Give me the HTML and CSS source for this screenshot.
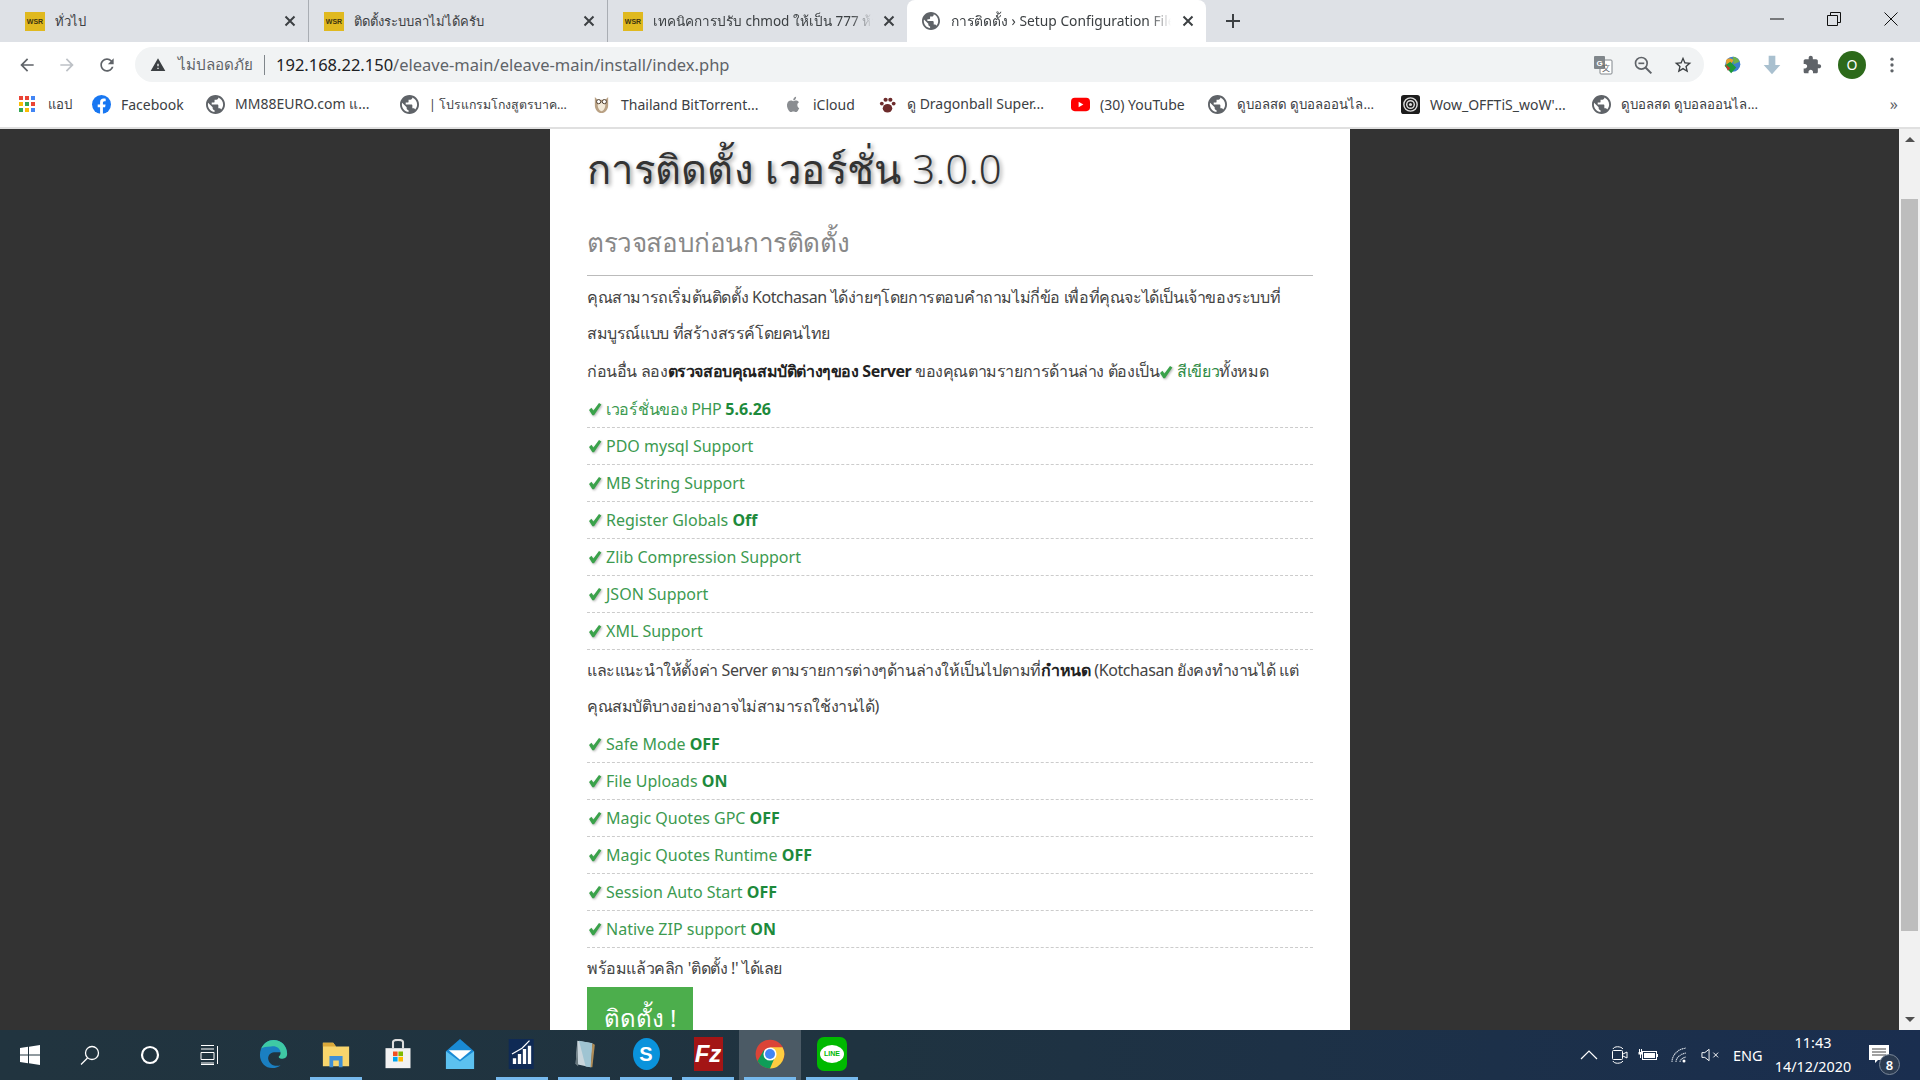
FILE: index.html
```html
<!DOCTYPE html>
<html lang="th">
<head>
<meta charset="UTF-8">
<title>การติดตั้ง › Setup Configuration File</title>
<link rel="stylesheet" href="styles.css">
</head>
<body>
<svg class="sprite" width="0" height="0">
  <symbol id="globe" viewBox="2 2 20 20"><path d="M12 2C6.48 2 2 6.48 2 12s4.48 10 10 10 10-4.48 10-10S17.52 2 12 2zm-1 17.93c-3.95-.49-7-3.85-7-7.93 0-.62.08-1.21.21-1.79L9 15v1c0 1.1.9 2 2 2v1.93zm6.9-2.54c-.26-.81-1-1.39-1.9-1.39h-1v-3c0-.55-.45-1-1-1H8v-2h2c.55 0 1-.45 1-1V7h2c1.1 0 2-.9 2-2v-.41c2.93 1.19 5 4.06 5 7.41 0 2.08-.8 3.97-2.1 5.39z"/></symbol>
  <symbol id="close" viewBox="0 0 12 12"><path d="M1.5 1.5l9 9M10.5 1.5l-9 9" stroke="currentColor" stroke-width="2" fill="none"/></symbol>
  <symbol id="check" viewBox="0 0 14 14"><path d="M1 8l2.400-2.200 2 2.600L11 1l2.400 1.600L6 13.200H4.400z"/></symbol>
</svg>

<div class="tabbar">
  <div class="tab">
    <span class="wsr">WSR</span>
    <span class="tab-title">ทั่วไป</span>
    <svg class="tab-close"><use href="#close"/></svg>
  </div>
  <div class="tab">
    <span class="wsr">WSR</span>
    <span class="tab-title">ติดตั้งระบบลาไม่ได้ครับ</span>
    <svg class="tab-close"><use href="#close"/></svg>
  </div>
  <div class="tab no-sep">
    <span class="wsr">WSR</span>
    <span class="tab-title fade">เทคนิคการปรับ chmod ให้เป็น 777 ห้าม</span>
    <svg class="tab-close"><use href="#close"/></svg>
  </div>
  <div class="tab active">
    <svg class="tab-globe"><use href="#globe"/></svg>
    <span class="tab-title fade">การติดตั้ง › Setup Configuration File</span>
    <svg class="tab-close"><use href="#close"/></svg>
  </div>
  <svg class="new-tab" viewBox="0 0 16 16"><path d="M8 1v14M1 8h14" stroke="#3c4043" stroke-width="2"/></svg>
  <div class="win-controls">
    <svg viewBox="0 0 14 14"><path d="M0 7h14" stroke="#111" fill="none"/></svg>
    <svg viewBox="0 0 14 14"><path d="M.5 3.500h10v10H.5zM3.500 3.500v-3h10v10h-3" stroke="#111" fill="none"/></svg>
    <svg viewBox="0 0 14 14"><path d="M.5.5l13 13M13.500.5l-13 13" stroke="#111" fill="none"/></svg>
  </div>
</div>

<div class="toolbar">
  <svg class="nav-btn" viewBox="0 0 24 24"><path d="M20 11H7.830l5.590-5.590L12 4l-8 8 8 8 1.410-1.410L7.830 13H20v-2z"/></svg>
  <svg class="nav-btn off" viewBox="0 0 24 24"><path d="M4 11h12.170l-5.590-5.590L12 4l8 8-8 8-1.410-1.410L16.170 13H4v-2z"/></svg>
  <svg class="nav-btn" viewBox="0 0 24 24"><path d="M17.650 6.350C16.200 4.900 14.210 4 12 4c-4.420 0-7.990 3.580-7.990 8s3.570 8 7.990 8c3.730 0 6.840-2.550 7.730-6h-2.080c-.82 2.330-3.040 4-5.650 4-3.310 0-6-2.690-6-6s2.690-6 6-6c1.660 0 3.140.69 4.220 1.780L13 11h7V4l-2.350 2.350z"/></svg>
  <div class="omnibox">
    <svg class="warn" viewBox="0 0 24 24"><path d="M1 21h22L12 2 1 21zm12-3h-2v-2h2v2zm0-4h-2v-4h2v4z"/></svg>
    <span class="insecure">ไม่ปลอดภัย</span>
    <span class="pipe"></span>
    <span class="url">192.168.22.150<span class="url-rest">/eleave-main/eleave-main/install/index.php</span></span>
    <div class="omni-icons">
      <svg viewBox="0 0 20 20"><rect x="7" y="5" width="12" height="14" rx="1" fill="#fff" stroke="#80868b"/><rect x="1" y="1" width="11" height="13" rx="1" fill="#80868b"/><text x="6.500" y="11" class="tr-g">G</text><text x="13" y="16" class="tr-z">文</text></svg>
      <svg viewBox="0 0 24 24"><circle cx="10" cy="10" r="7" fill="none" stroke="#5f6368" stroke-width="2"/><path d="M15 15l7 7" stroke="#5f6368" stroke-width="2.400"/><path d="M6.500 10h7" stroke="#5f6368" stroke-width="2"/></svg>
      <svg viewBox="0 0 24 24"><path fill="#3c4043" d="M22 9.240l-7.190-.62L12 2 9.190 8.630 2 9.240l5.460 4.730L5.820 21 12 17.270 18.180 21l-1.630-7.030L22 9.240zM12 15.400l-3.760 2.270 1-4.280-3.320-2.880 4.380-.38L12 6.100l1.710 4.040 4.380.38-3.320 2.880 1 4.280L12 15.400z"/></svg>
    </div>
  </div>
  <div class="ext-icons">
    <svg viewBox="0 0 24 24"><circle cx="13" cy="11" r="9" fill="#3d7fce"/><path d="M5 6c3-3 7-2 9 0l-3 5-6 3z" fill="#e7a12c"/><path d="M13 2c4 0 7 3 8 6l-7 3z" fill="#6fb24a"/><path d="M3 13l7-5 7 7-6 7z" fill="#1e9a36"/><path d="M4 11l6 5-3 3z" fill="#c8372d"/></svg>
    <svg viewBox="0 0 24 24"><path d="M8 1h8v11h6L12 23 2 12h6z" fill="#a9c0cf"/></svg>
    <svg viewBox="0 0 24 24"><path fill="#5f6368" d="M20.500 11H19V7c0-1.100-.9-2-2-2h-4V3.500C13 2.120 11.880 1 10.500 1S8 2.120 8 3.500V5H4c-1.100 0-1.990.9-1.990 2v3.800H3.500c1.490 0 2.700 1.210 2.700 2.700s-1.210 2.700-2.700 2.700H2V20c0 1.100.9 2 2 2h3.800v-1.500c0-1.490 1.210-2.700 2.700-2.700 1.490 0 2.700 1.210 2.700 2.700V22H17c1.100 0 2-.9 2-2v-4h1.500c1.380 0 2.500-1.120 2.500-2.500S21.880 11 20.500 11z"/></svg>
    <span class="avatar">O</span>
    <svg viewBox="0 0 24 24"><circle cx="12" cy="5" r="2" fill="#5f6368"/><circle cx="12" cy="12" r="2" fill="#5f6368"/><circle cx="12" cy="19" r="2" fill="#5f6368"/></svg>
  </div>
</div>

<div class="bookmarks">
  <div class="bm">
    <svg class="bm-icon" viewBox="0 0 16 16">
      <rect x="0" y="0" width="4" height="4" fill="#ea4335"/><rect x="6" y="0" width="4" height="4" fill="#ea4335"/><rect x="12" y="0" width="4" height="4" fill="#4285f4"/>
      <rect x="0" y="6" width="4" height="4" fill="#fbbc05"/><rect x="6" y="6" width="4" height="4" fill="#34a853"/><rect x="12" y="6" width="4" height="4" fill="#ea4335"/>
      <rect x="0" y="12" width="4" height="4" fill="#34a853"/><rect x="6" y="12" width="4" height="4" fill="#fbbc05"/><rect x="12" y="12" width="4" height="4" fill="#4285f4"/>
    </svg>
    <span class="th">แอป</span>
  </div>
  <div class="bm">
    <svg class="bm-icon big" viewBox="0 0 20 20"><circle cx="10" cy="10" r="10" fill="#1877f2"/><path d="M13.800 12.900l.5-2.900h-2.800V8.100c0-.8.4-1.600 1.600-1.600h1.300V4s-1.100-.2-2.200-.2c-2.300 0-3.700 1.400-3.700 3.900V10H6v2.900h2.500V20h3v-7.100z" fill="#fff"/></svg>
    <span>Facebook</span>
  </div>
  <div class="bm"><svg class="bm-icon big globe"><use href="#globe"/></svg><span>MM88EURO.com แ...</span></div>
  <div class="bm"><svg class="bm-icon big globe"><use href="#globe"/></svg><span class="th tight">| โปรแกรมโกงสูตรบาค...</span></div>
  <div class="bm">
    <svg class="bm-icon big" viewBox="0 0 20 20"><path d="M3 2l3 3h8l3-3v9c0 4-3 8-7 8s-7-4-7-8z" fill="#b9a184"/><path d="M6 11c0-2 1-3 4-3s4 1 4 3-2 6-4 6-4-4-4-6z" fill="#f3ead9"/><circle cx="7" cy="7" r="2.200" fill="#fff" stroke="#4a3a2a"/><circle cx="13" cy="7" r="2.200" fill="#fff" stroke="#4a3a2a"/></svg>
    <span>Thailand BitTorrent...</span>
  </div>
  <div class="bm">
    <svg class="bm-icon big" viewBox="0 0 20 20"><path d="M14 10.500c0-2 1.600-3 1.700-3-1-1.400-2.400-1.600-2.900-1.600-1.200-.1-2.400.7-3 .7s-1.600-.7-2.600-.7C5.800 5.900 4.500 6.700 3.800 8c-1.400 2.400-.4 6 1 8 .7 1 1.500 2 2.500 2s1.400-.6 2.600-.6 1.500.6 2.600.6 1.800-1 2.400-2c.8-1.100 1.100-2.200 1.100-2.200s-2-.9-2-3.300zM12 4.400c.5-.7.900-1.600.8-2.500-.8 0-1.700.5-2.300 1.200-.5.600-.9 1.500-.8 2.400.9.100 1.800-.4 2.300-1.100z" fill="#8a8d91"/></svg>
    <span>iCloud</span>
  </div>
  <div class="bm">
    <svg class="bm-icon big" viewBox="0 0 20 20" fill="#6d2b2b"><ellipse cx="10" cy="14" rx="5" ry="4.500"/><circle cx="4" cy="9" r="2"/><circle cx="8" cy="5" r="2.200"/><circle cx="13" cy="5" r="2.200"/><circle cx="16.500" cy="9" r="2"/></svg>
    <span>ดู Dragonball Super...</span>
  </div>
  <div class="bm">
    <svg class="bm-icon big" viewBox="0 0 20 20"><rect x="0" y="3" width="20" height="14" rx="4" fill="#f00"/><path d="M8 7l5 3-5 3z" fill="#fff"/></svg>
    <span>(30) YouTube</span>
  </div>
  <div class="bm"><svg class="bm-icon big globe"><use href="#globe"/></svg><span class="th">ดูบอลสด ดูบอลออนไล...</span></div>
  <div class="bm">
    <svg class="bm-icon big" viewBox="0 0 20 20"><rect width="20" height="20" rx="3" fill="#1c1c1c"/><circle cx="10" cy="10" r="7" fill="none" stroke="#ddd" stroke-width="1.500"/><circle cx="10" cy="10" r="4" fill="none" stroke="#ddd" stroke-width="1.500"/><circle cx="10" cy="10" r="1.600" fill="#ddd"/></svg>
    <span>Wow_OFFTiS_woW'...</span>
  </div>
  <div class="bm"><svg class="bm-icon big globe"><use href="#globe"/></svg><span class="th">ดูบอลสด ดูบอลออนไล...</span></div>
  <span class="bm-more">»</span>
</div>

<div class="viewport">
  <div class="page">
    <div class="sheet">
      <h1>การติดตั้ง เวอร์ชั่น 3.0.0</h1>
      <h2>ตรวจสอบก่อนการติดตั้ง</h2>
      <p>คุณสามารถเริ่มต้นติดตั้ง Kotchasan ได้ง่ายๆโดยการตอบคำถามไม่กี่ข้อ เพื่อที่คุณจะได้เป็นเจ้าของระบบที่สมบูรณ์แบบ ที่สร้างสรรค์โดยคนไทย</p>
      <p>ก่อนอื่น ลอง<b>ตรวจสอบคุณสมบัติต่างๆของ Server</b> ของคุณตามรายการด้านล่าง ต้องเป็น<svg class="check"><use href="#check"/></svg> <span class="green">สีเขียว</span>ทั้งหมด</p>
      <ul>
        <li><svg class="check"><use href="#check"/></svg><span class="li-th">เวอร์ชั่นของ PHP </span><b>5.6.26</b></li>
        <li><svg class="check"><use href="#check"/></svg>PDO mysql Support</li>
        <li><svg class="check"><use href="#check"/></svg>MB String Support</li>
        <li><svg class="check"><use href="#check"/></svg>Register Globals <b>Off</b></li>
        <li><svg class="check"><use href="#check"/></svg>Zlib Compression Support</li>
        <li><svg class="check"><use href="#check"/></svg>JSON Support</li>
        <li><svg class="check"><use href="#check"/></svg>XML Support</li>
      </ul>
      <p>และแนะนำให้ตั้งค่า Server ตามรายการต่างๆด้านล่างให้เป็นไปตามที่<b>กำหนด</b> (Kotchasan ยังคงทำงานได้ แต่คุณสมบัติบางอย่างอาจไม่สามารถใช้งานได้)</p>
      <ul>
        <li><svg class="check"><use href="#check"/></svg>Safe Mode <b>OFF</b></li>
        <li><svg class="check"><use href="#check"/></svg>File Uploads <b>ON</b></li>
        <li><svg class="check"><use href="#check"/></svg>Magic Quotes GPC <b>OFF</b></li>
        <li><svg class="check"><use href="#check"/></svg>Magic Quotes Runtime <b>OFF</b></li>
        <li><svg class="check"><use href="#check"/></svg>Session Auto Start <b>OFF</b></li>
        <li><svg class="check"><use href="#check"/></svg>Native ZIP support <b>ON</b></li>
      </ul>
      <p>พร้อมแล้วคลิก 'ติดตั้ง !' ได้เลย</p>
      <a class="install-btn" href="#">ติดตั้ง !</a>
    </div>
  </div>
  <div class="scrollbar">
    <span class="arrow up"></span>
    <div class="track"><div class="thumb"></div></div>
    <span class="arrow down"></span>
  </div>
</div>

<div class="taskbar">
  <div class="sys-btn"><svg viewBox="0 0 20 20"><path d="M0 3l8-1.200V9.500H0zM9 1.700L20 0v9.500H9zM0 10.500h8v7.700L0 17zM9 10.500h11V20L9 18.300z" fill="#fff"/></svg></div>
  <div class="sys-btn"><svg viewBox="0 0 20 20"><circle cx="12" cy="8" r="6.500" fill="none" stroke="#fff" stroke-width="1.300"/><path d="M7.500 13L1 19.500" stroke="#fff" stroke-width="1.300"/></svg></div>
  <div class="sys-btn"><svg viewBox="0 0 20 20"><circle cx="10" cy="10" r="8" fill="none" stroke="#fff" stroke-width="2.200"/></svg></div>
  <div class="sys-btn"><svg viewBox="0 0 20 20"><path d="M1 .5h13M1 4h13M1 7.500h13v7H1zM1 18h13M1 19.500h13M17.500 1v18" stroke="#fff" fill="none"/></svg></div>
  <div class="sys-gap"></div>

  <div class="app"><svg viewBox="0 0 32 32"><path d="M30 16C30 7 23.500 1 15.500 1 7.500 1 1 8 1 17c0 8 6 14 13 14 4 0 7-1 9-3-6 2-12-1-13-6-1-4 2-8 6-8h7c4 0 7 2 7 2z" fill="#1a7fc1"/><path d="M2 11C5 4 10 1 15.500 1 23.500 1 30 7 30 16c0 4-3 5-6 5-2 0-3-1-3-2 1-1 2-2 2-4 0-5-5-8-10-7-5 0-9 1-11 2z" fill="#3fc9a4"/></svg></div>
  <div class="app running"><svg viewBox="0 0 32 32"><path d="M2 4h11l3 4h14v21H2z" fill="#f8d56c"/><path d="M2 4h11l3 4H2z" fill="#dba93a"/><path d="M9 30V18h14v12h-4v-7h-6v7z" fill="#3f8fd6"/></svg></div>
  <div class="app"><svg viewBox="0 0 32 36"><path d="M1 11h30v24H1z" fill="#f2f2f2"/><path d="M10 11V4c0-4 12-4 12 0v7" fill="none" stroke="#ddd" stroke-width="2.500"/><rect x="10" y="15" width="5.500" height="5.500" fill="#f25022"/><rect x="16.500" y="15" width="5.500" height="5.500" fill="#7fba00"/><rect x="10" y="21.500" width="5.500" height="5.500" fill="#00a4ef"/><rect x="16.500" y="21.500" width="5.500" height="5.500" fill="#ffb900"/></svg></div>
  <div class="app"><svg viewBox="0 0 32 32"><path d="M1 13L16 0l15 13v19H1z" fill="#1a8ad4"/><path d="M1 13l15 11 15-11v19H1z" fill="#5cc1f0"/><path d="M4 12h24L16 22z" fill="#fff"/></svg></div>
  <div class="app running"><svg viewBox="0 0 32 36"><rect width="30" height="36" fill="#0f2a55"/><path d="M5 30v-7h4v7zM11 30V18h4v12zM17 30V12h4v18zM23 30V8h4v22z" fill="#fff"/><path d="M4 18L16 11l9-9" stroke="#fff" stroke-width="1.500" fill="none"/></svg></div>
  <div class="app running"><svg viewBox="0 0 32 36"><path d="M8 2l18 3-2 29-18-4z" fill="#c9d6dc"/><path d="M10 2l16 3-2 29-6-1z" fill="#9fc4d2"/><path d="M8 2l-2 28 3 3z" fill="#6a7a80"/><path d="M26 5l3 2-3 27h-2z" fill="#b08d57"/></svg></div>
  <div class="app running"><span class="skype">S</span></div>
  <div class="app running"><span class="fz">Fz</span></div>
  <div class="app running current"><svg viewBox="0 0 48 48"><circle cx="24" cy="24" r="23" fill="#db4437"/><path d="M24 24L44 35A23 23 0 0 1 24 47 23 23 0 0 1 4 35L14 18z" fill="#0f9d58"/><path d="M24 13h20a23 23 0 0 1 0 22 23 23 0 0 1-20 12l10-23z" fill="#ffcd40"/><circle cx="24" cy="24" r="10.500" fill="#fff"/><circle cx="24" cy="24" r="8" fill="#4285f4"/></svg></div>
  <div class="app running"><span class="line"><span class="line-bubble">LINE</span></span></div>

  <div class="tray">
    <svg class="t-chev" viewBox="0 0 18 10"><path d="M1 9l8-8 8 8" stroke="#fff" stroke-width="1.200" fill="none"/></svg>
    <svg class="t-video" viewBox="0 0 16 20"><path d="M1 4c1-3 8-3 10 0M1 16c1 3 8 3 10 0" stroke="#fff" fill="none"/><rect x=".5" y="5.500" width="10" height="9" rx="1" fill="none" stroke="#fff"/><path d="M11 9l4-2v6l-4-2" stroke="#fff" fill="none"/></svg>
    <svg class="t-batt" viewBox="0 0 20 12"><rect x="4.500" y="2.500" width="14" height="8" fill="none" stroke="#fff"/><rect x="6" y="4" width="11" height="5" fill="#fff"/><path d="M19.500 5v3" stroke="#fff"/><path d="M1.500 0v3M3.500 0v3" stroke="#fff"/><path d="M.5 3h4v2.500H3V9H2V5.500H.5z" fill="#fff"/></svg>
    <svg class="t-wifi" viewBox="0 0 16 16"><path d="M1 15C1 8 7 2 15 1M5 15c0-4 4-8 10-9M9 15c0-2 2-4 6-5" stroke="#cfd6df" stroke-width="1.100" stroke-dasharray="1.400 .5" fill="none"/><circle cx="13" cy="14" r="1.500" fill="#fff"/></svg>
    <svg class="t-vol" viewBox="0 0 20 14"><path d="M1 4.500h3L8.500 1v12L4 9.500H1z" stroke="#fff" fill="none"/><path d="M13 4.500l5 5M18 4.500l-5 5" stroke="#fff" fill="none"/></svg>
    <span class="t-lang">ENG</span>
    <div class="t-clock"><span>11:43</span><span>14/12/2020</span></div>
    <div class="t-notif">
      <svg viewBox="0 0 20 18"><path d="M0 0h20v15H9l-3 3v-3H0z" fill="#fff"/><path d="M3 4h14M3 7h14M3 10h14" stroke="#444"/></svg>
      <span class="badge">8</span>
    </div>
  </div>
</div>
</body>
</html>
```

FILE: styles.css
```css
* {
  box-sizing: border-box;
}
html, body {
  height: 100%;
}
body {
  margin: 0;
  display: flex;
  flex-direction: column;
  overflow: hidden;
  font-family: "Noto Sans", "Open Sans", sans-serif;
  background: #fff;
  color: #333;
}
.sprite {
  position: absolute;
}

/* tabs */
.tabbar {
  height: 42px;
  flex: none;
  display: flex;
  padding-left: 10px;
  background: #dee1e6;
}
.tab {
  width: 299px;
  height: 42px;
  display: flex;
  align-items: center;
  padding: 0 12px 0 15px;
  gap: 10px;
  font-size: 13px;
  color: #3c4043;
  border-right: 1px solid #a9adb3;
  background-clip: padding-box;
}
.tab.no-sep {
  border-right: 0;
}
.tab.active {
  background: #fff;
  border: 0;
  border-radius: 8px 8px 0 0;
  padding-left: 15px;
  gap: 11px;
}
.wsr {
  width: 20px;
  height: 19px;
  flex: none;
  display: flex;
  align-items: center;
  justify-content: center;
  background: #e0b91f;
  color: #3d3410;
  font: bold 7px "Liberation Sans", sans-serif;
}
.tab-title {
  flex: 1;
  min-width: 0;
  white-space: nowrap;
  overflow: hidden;
}
.tab-title.fade {
  font-size: 13.5px;
  -webkit-mask-image: linear-gradient(to right, #000 90%, transparent 100%);
  mask-image: linear-gradient(to right, #000 90%, transparent 100%);
}
.tab.active .tab-title.fade {
  font-size: 13.8px;
}
.tab-close {
  width: 12px;
  height: 12px;
  flex: none;
  color: #3c4043;
}
.tab-globe {
  width: 18px;
  height: 18px;
  flex: none;
  fill: #5f6368;
}
.new-tab {
  width: 16px;
  height: 16px;
  margin: 13px 0 0 19px;
}
.win-controls {
  margin-left: auto;
  display: flex;
  padding: 12px 22px 0 0;
  gap: 43px;
}
.win-controls svg {
  width: 14px;
  height: 14px;
}

/* address bar */
.toolbar {
  height: 45px;
  flex: none;
  display: flex;
  align-items: center;
  padding: 0 18px 0 17px;
  background: #fff;
}
.nav-btn {
  width: 20px;
  height: 20px;
  margin-right: 20px;
  fill: #5f6368;
}
.nav-btn.off {
  fill: #bdc1c6;
}
.omnibox {
  width: 1569px;
  height: 35px;
  margin-left: -2px;
  display: flex;
  align-items: center;
  padding-left: 15px;
  border-radius: 18px;
  background: #f1f3f4;
  font-size: 16.5px;
}
.warn {
  width: 16px;
  height: 16px;
  fill: #3c4043;
}
.insecure {
  margin-left: 12px;
  font-size: 15.2px;
  color: #5f6368;
}
.pipe {
  width: 1px;
  height: 20px;
  margin: 0 11px;
  background: #80868b;
}
.url {
  color: #202124;
}
.url-rest {
  color: #5f6368;
}
.omni-icons {
  margin-left: auto;
  display: flex;
  gap: 20px;
  padding-right: 11px;
}
.omni-icons svg {
  width: 20px;
  height: 20px;
}
.tr-g {
  fill: #fff;
  font: bold 8px "Liberation Sans", sans-serif;
  text-anchor: middle;
}
.tr-z {
  fill: #5f6368;
  font: 8px "Noto Sans CJK SC", sans-serif;
  text-anchor: middle;
}
.ext-icons {
  margin-left: 18px;
  display: flex;
  align-items: center;
  gap: 20px;
}
.ext-icons svg {
  width: 20px;
  height: 20px;
}
.avatar {
  width: 28px;
  height: 28px;
  margin: 0 -4px;
  display: flex;
  align-items: center;
  justify-content: center;
  border-radius: 50%;
  background: #2d6a1b;
  color: #fff;
  font-size: 14px;
}

/* bookmarks */
.bookmarks {
  height: 42px;
  flex: none;
  display: grid;
  grid-template-columns: 73px 114px 194px 192px 192px 94px 193px 137px 193px 191px 280px 1fr;
  align-items: center;
  padding: 0 0 6px 19px;
  border-bottom: 2px solid #e0e0e0;
  font-size: 14px;
  color: #3c4043;
}
.bm {
  display: flex;
  align-items: center;
  gap: 10px;
  white-space: nowrap;
}
.bm:first-child {
  gap: 13px;
}
.bm .th {
  font-size: 13.2px;
}
.bm .th.tight {
  font-size: 12.3px;
}
.bm-icon {
  width: 16px;
  height: 16px;
  flex: none;
}
.bm-icon.big {
  width: 19px;
  height: 19px;
}
.bm-icon.globe {
  fill: #5f6368;
}
.bm-more {
  justify-self: end;
  padding-right: 22px;
  color: #5f6368;
  font-size: 16px;
}

/* page */
.viewport {
  flex: 1;
  min-height: 0;
  display: flex;
}
.page {
  flex: 1;
  min-width: 0;
  background: #333;
  overflow: hidden;
}
.sheet {
  width: 800px;
  height: 100%;
  margin-left: 550px;
  padding: 0 37px;
  background: #fff;
  font-size: 16px;
  line-height: 36px;
}
h1 {
  margin: 0;
  padding-top: 9px;
  font-size: 40px;
  font-weight: 300;
  line-height: 62px;
  letter-spacing: .3px;
  color: #333;
  text-shadow: 2px 2px 4px rgba(0, 0, 0, .4);
}
h2 {
  margin: 22px 0 3px;
  padding-bottom: 13px;
  font-size: 26px;
  font-weight: 300;
  line-height: 40px;
  letter-spacing: -.4px;
  color: #888;
  border-bottom: 1px solid #bbb;
}
p {
  margin: 0 0 1px;
  color: #444;
  letter-spacing: -.4px;
}
h2 + p {
  margin-bottom: 2px;
}
ul + p {
  margin-top: 2px;
}
p b {
  color: #222;
}
ul {
  list-style: none;
  margin: 0;
  padding: 1px 0 0;
}
li {
  height: 37px;
  display: flex;
  align-items: center;
  white-space: pre-wrap;
  border-bottom: 1px dashed #ccc;
  color: #3c9a50;
}
li b {
  color: #1d8a3b;
}
.li-th {
  letter-spacing: -.3px;
}
.check {
  width: 14px;
  height: 14px;
  margin-left: 1px;
  margin-right: 4px;
  fill: #3aa24a;
  filter: drop-shadow(1px 1px 1px rgba(0, 0, 0, .3));
}
p .check {
  vertical-align: -2px;
  margin: 0;
}
.green {
  color: #2e8b45;
}
.install-btn {
  display: block;
  width: 106px;
  height: 62px;
  margin-top: 1px;
  padding-top: 13px;
  text-align: center;
  background: #4cae4c;
  color: #fff;
  font-size: 24px;
  text-decoration: none;
}

/* scrollbar */
.scrollbar {
  width: 21px;
  flex: none;
  display: flex;
  flex-direction: column;
  background: #f1f1f1;
}
.arrow {
  height: 21px;
  flex: none;
  display: flex;
  align-items: center;
  justify-content: center;
}
.arrow::before {
  content: "";
  border-left: 5px solid transparent;
  border-right: 5px solid transparent;
}
.arrow.up::before {
  border-bottom: 5px solid #505050;
}
.arrow.down::before {
  border-top: 5px solid #505050;
}
.track {
  flex: 1;
  padding: 49px 2px 0;
}
.thumb {
  height: 732px;
  background: #bdbdbd;
}

/* windows taskbar */
.taskbar {
  height: 50px;
  flex: none;
  display: flex;
  background: linear-gradient(to right, #21343f, #1f3340 45%, #1a2e4f);
  color: #fff;
}
.sys-btn {
  width: 60px;
  display: flex;
  align-items: center;
  justify-content: center;
}
.sys-btn svg {
  width: 20px;
  height: 20px;
}
.sys-gap {
  width: 3px;
}
.app {
  width: 62px;
  display: flex;
  align-items: center;
  justify-content: center;
  padding-bottom: 2px;
  position: relative;
}
.app svg {
  width: 30px;
  height: 30px;
}
.app.running::after {
  content: "";
  position: absolute;
  left: 5px;
  right: 5px;
  bottom: 0;
  height: 3px;
  background: #76b9ed;
}
.app.current {
  background: #4b5a65;
}
.skype {
  width: 27px;
  height: 32px;
  display: flex;
  align-items: center;
  justify-content: center;
  border-radius: 50%;
  background: #0a93dc;
  color: #fff;
  font: bold 20px "Liberation Sans", sans-serif;
}
.fz {
  width: 29px;
  height: 34px;
  display: flex;
  align-items: center;
  justify-content: center;
  background: #a31515;
  color: #fff;
  font: italic bold 24px "Liberation Sans", sans-serif;
}
.line {
  width: 30px;
  height: 34px;
  display: flex;
  align-items: center;
  justify-content: center;
  border-radius: 7px;
  background: #00b900;
}
.line-bubble {
  width: 24px;
  height: 18px;
  display: block;
  border-radius: 50%;
  background: #fff;
  color: #00b900;
  font: bold 7px/18px "Liberation Sans", sans-serif;
  text-align: center;
}
.tray {
  margin-left: auto;
  padding-right: 12px;
  display: flex;
  align-items: center;
}
.tray svg {
  flex: none;
}
.t-chev {
  width: 18px;
  height: 10px;
  margin-right: 14px;
}
.t-video {
  width: 16px;
  height: 20px;
  margin-right: 10px;
}
.t-batt {
  width: 20px;
  height: 12px;
  margin-right: 13px;
}
.t-wifi {
  width: 16px;
  height: 16px;
  margin-right: 14px;
}
.t-vol {
  width: 19px;
  height: 14px;
  margin-right: 13px;
}
.t-lang {
  width: 30px;
  font-size: 14.5px;
}
.t-clock {
  width: 76px;
  margin-left: 12px;
  display: flex;
  flex-direction: column;
  align-items: center;
  gap: 4px;
  font-size: 14.4px;
  line-height: 20px;
}
.t-notif {
  width: 49px;
  height: 50px;
  margin-left: 8px;
  padding: 15px 0 0 10px;
  position: relative;
}
.t-notif svg {
  width: 20px;
  height: 18px;
  display: block;
}
.badge {
  position: absolute;
  left: 20px;
  top: 24px;
  width: 21px;
  height: 21px;
  display: flex;
  align-items: center;
  justify-content: center;
  border: 1px solid #7a8798;
  border-radius: 50%;
  background: #2c3c52;
  font-size: 13px;
  font-weight: 600;
}
```
